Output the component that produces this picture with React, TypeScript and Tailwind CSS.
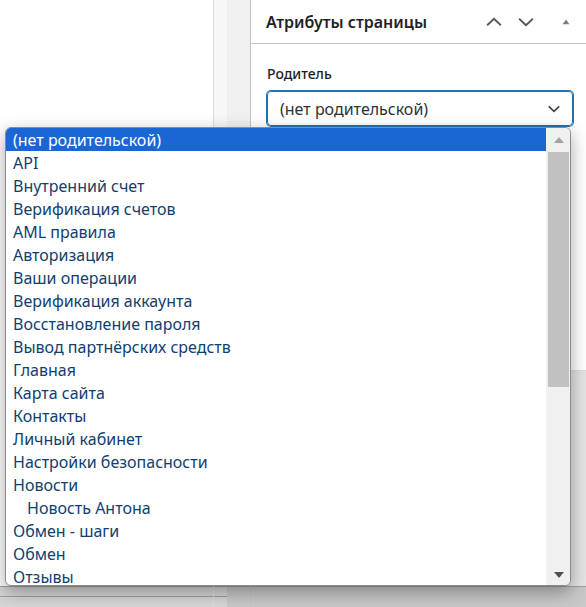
import React from "react";

const pages: { title: string; level?: number }[] = [
  { title: "(нет родительской)" },
  { title: "API" },
  { title: "Внутренний счет" },
  { title: "Верификация счетов" },
  { title: "AML правила" },
  { title: "Авторизация" },
  { title: "Ваши операции" },
  { title: "Верификация аккаунта" },
  { title: "Восстановление пароля" },
  { title: "Вывод партнёрских средств" },
  { title: "Главная" },
  { title: "Карта сайта" },
  { title: "Контакты" },
  { title: "Личный кабинет" },
  { title: "Настройки безопасности" },
  { title: "Новости" },
  { title: "Новость Антона", level: 1 },
  { title: "Обмен - шаги" },
  { title: "Обмен" },
  { title: "Отзывы" },
];

function Chevron({ up = false }: { up?: boolean }) {
  return (
    <svg width="22" height="22" viewBox="0 0 24 24" fill="none">
      <path
        d={up ? "M4.5 15.5 12 8.5l7.5 7" : "M4.5 8.5 12 15.5l7.5-7"}
        stroke="#50575e"
        strokeWidth="2"
      />
    </svg>
  );
}

export default function App() {
  const selected = 0;

  return (
    <div
      className="relative w-[586px] h-[607px] overflow-hidden flex bg-[#e4e4e4]"
      style={{ fontFamily: '"Noto Sans", "Open Sans", sans-serif' }}
    >
      {/* main editor area */}
      <div className="w-[213px] h-full flex flex-col bg-white">
        <div className="flex-1" />
        <div className="h-[21px] bg-[#d6d6d6] border-t border-[#a0a0a0] flex flex-col">
          <div className="h-[10px] border-b border-[#a0a0a0]" />
        </div>
      </div>
      <div className="w-[14px] h-full flex flex-col bg-[#f6f7f7] border-l border-[#dcdcde]">
        <div className="flex-1" />
        <div className="h-[21px] bg-[#d6d6d6] border-t border-[#a0a0a0] flex flex-col">
          <div className="h-[10px] border-b border-[#a0a0a0]" />
        </div>
      </div>
      <div className="w-[24px] h-full flex flex-col bg-[#f0f0f1] border-r border-[#c3c4c7]">
        <div className="flex-1" />
        <div className="h-[21px] bg-[#c8c8c8] border-t border-[#a0a0a0]" />
      </div>

      {/* sidebar panel */}
      <div className="flex-1 flex flex-col">
        <div className="h-[371px] bg-white border-b border-[#dcdcde] flex flex-col">
          <div className="h-[44px] border-b border-[#c3c4c7] flex items-center pl-[15px] pr-[11px]">
            <h2 className="flex-1 text-[16px] font-semibold text-[#1d2327]">
              Атрибуты страницы
            </h2>
            <div className="flex items-center gap-[10px]">
              <Chevron up />
              <Chevron />
              <svg width="18" height="18" viewBox="0 0 24 24" className="ml-[10px]">
                <path d="M7.5 15h9L12 8.5z" fill="#787c82" />
              </svg>
            </div>
          </div>
          <div className="pl-[16px] pr-[12px] pt-[20px]">
            <label className="block text-[14px] font-medium text-[#1e1e1e] leading-[20px]">
              Родитель
            </label>
            <div className="mt-[7px] h-[35px] w-[306px] rounded-[4px] border border-[#2271b1] shadow-[0_0_0_1px_#2271b1] flex items-center pl-[12px] pr-[9px] text-[16px] text-[#2c3338]">
              <span className="flex-1">(нет родительской)</span>
              <svg width="18" height="18" viewBox="0 0 24 24" fill="none">
                <path d="M5 8.5 12 15l7-6.5" stroke="#3c434a" strokeWidth="2.2" />
              </svg>
            </div>
          </div>
        </div>
        <div className="flex-1" />
        <div className="h-[21px] bg-[#c8c8c8] border-t border-[#a0a0a0]" />
      </div>

      {/* open select list */}
      <div className="absolute left-[5px] top-[127px] w-[566px] h-[459px] rounded-[6px] border border-[#8c8c8c] bg-white shadow-[0_6px_18px_rgba(0,0,0,0.35)] flex overflow-hidden">
        <ul className="flex-1">
          {pages.map((p, i) => (
            <li
              key={p.title}
              className={
                "h-[23px] flex items-center text-[16px] leading-none " +
                (i === selected ? "bg-[#1a66d2] text-white" : "text-[#11406f]") +
                (p.level ? " pl-[21px]" : " pl-[7px]")
              }
            >
              {p.title}
            </li>
          ))}
        </ul>
        <div className="w-[24px] h-full bg-[#f0f0f0] flex flex-col items-center pl-[1px]">
          <div className="h-[24px] flex items-center justify-center">
            <svg width="10" height="6" viewBox="0 0 10 6">
              <path d="M0 6h10L5 0z" fill="#a3a3a3" />
            </svg>
          </div>
          <div className="w-[21px] h-[235px] bg-[#c1c1c1]" />
          <div className="flex-1" />
          <div className="h-[20px] flex items-center justify-center">
            <svg width="10" height="6" viewBox="0 0 10 6">
              <path d="M0 0h10L5 6z" fill="#505050" />
            </svg>
          </div>
        </div>
      </div>
    </div>
  );
}
